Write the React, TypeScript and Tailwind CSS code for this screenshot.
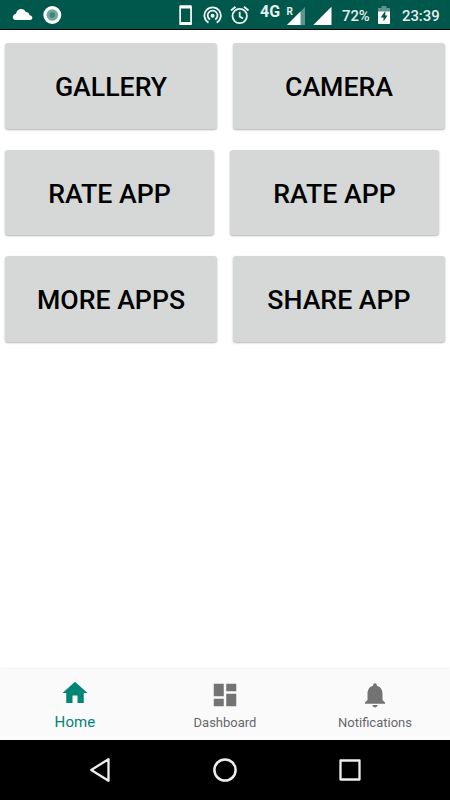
import React from "react";

function StatusBar() {
  return (
    <header className="flex h-[30px] items-start border-b border-black bg-[#00574b] font-medium text-[#e6efed]">
      <svg className="ml-[12px] mt-[8px] shrink-0" width="21" height="13" viewBox="0 0 21 13">
        <path d="M4.5 12Q.8 12 .8 9.2 1 6.5 4 5.8 5 1 9.2 1q3.3 0 4.6 3 3.3.2 3.7 3.2 2.9.4 2.9 2.8Q20.2 12 18 12Z" fill="#fff" />
      </svg>
      <svg className="ml-[10px] mt-[5px] shrink-0" width="20" height="20" viewBox="0 0 20 20">
        <circle cx="9.3" cy="10" r="9" fill="#fff" />
        <circle cx="9.3" cy="10" r="5.8" fill="#6fa79f" />
        <circle cx="9.3" cy="10" r="2.7" fill="#3f857b" />
      </svg>
      <svg className="ml-[116px] mt-[5px] shrink-0" width="14" height="21" viewBox="0 0 14 21">
        <path fillRule="evenodd" d="M1.5.3h10.200q1.200 0 1.200 1.200v17.400q0 1.200-1.200 1.200H1.500Q.3 20.100.3 18.900V1.500Q.3.300 1.500.300ZM2 3.500v13.500h9.200V3.500Z" fill="#fff" />
      </svg>
      <svg className="ml-[10px] mt-[5px] shrink-0" width="20" height="20" viewBox="0 0 20 20" fill="none" stroke="#eef4f2" strokeWidth="1.8">
        <path d="M5.5 17.6A8.2 8.2 0 1 1 13.7 17.6" />
        <path d="M7 14.6A4.9 4.9 0 1 1 12.2 14.6" />
        <circle cx="9.6" cy="10.7" r="2" fill="#eef4f2" stroke="none" />
      </svg>
      <svg className="ml-[7px] mt-[5px] shrink-0" width="20" height="20" viewBox="0 0 20 20" fill="none" stroke="#eef4f2" strokeWidth="1.8">
        <circle cx="9.7" cy="11" r="7.2" />
        <path d="M1 5.5 5.5 1.7M14 1.7l4.5 3.8M9.7 6.8V11.5l3.3 2" />
      </svg>
      <span className="ml-[10px] mt-[2.5px] w-[22px] shrink-0 text-[16px] leading-[17px] font-bold">4G</span>
      <svg className="ml-[4px] mt-[6px] shrink-0" width="20" height="20" viewBox="0 0 20 20">
        <path d="M19 1V19H1Z" fill="#5d958c" />
        <path d="M14.5 5.5V19H1Z" fill="#fff" />
        <path d="M0 0H9V9H0Z" fill="#00574b" />
        <text x="0.5" y="8.8" fontSize="10" fontWeight="700" fill="#e6efed">R</text>
      </svg>
      <svg className="ml-[7px] mt-[6px] shrink-0" width="20" height="20" viewBox="0 0 20 20">
        <path d="M18.5 .8V19H.3Z" fill="#fff" />
      </svg>
      <span className="ml-[9px] mt-[6px] w-[29px] shrink-0 text-[14.8px] leading-[20px]">72%</span>
      <svg className="ml-[7px] mt-[6px] shrink-0" width="12" height="19" viewBox="0 0 12 19">
        <path d="M3.5 0h5v2H12v4.5H0V2h3.5Z" fill="#5d958c" />
        <path d="M0 5.5h12V17q0 1-1 1H1q-1 0-1-1Z" fill="#fff" />
        <path d="M7.3 5 2.7 11.5H5.5V15.5L9.5 9.5H7.3Z" fill="#00574b" />
      </svg>
      <span className="ml-[12px] mt-[6px] shrink-0 text-[14.8px] leading-[20px]">23:39</span>
    </header>
  );
}

function MenuButton({ label, size }: { label: string; size: string }) {
  return (
    <button
      className={`h-[85.5px] shrink-0 rounded-[3px] bg-[#d6d8d7] pt-[2px] text-[26.7px] font-medium text-black shadow-[0_1px_2px_rgba(0,0,0,0.3)] ${size}`}
    >
      {label}
    </button>
  );
}

export default function App() {
  return (
    <div className="flex h-[800px] w-[450px] flex-col overflow-hidden bg-white font-['Roboto',sans-serif]">
      <StatusBar />
      <main className="flex flex-1 flex-col gap-[21px] pl-[5px] pt-[13.3px]">
        <div className="flex gap-4">
          <MenuButton label="GALLERY" size="w-[212px]" />
          <MenuButton label="CAMERA" size="w-[212px]" />
        </div>
        <div className="flex gap-4">
          <MenuButton label="RATE APP" size="w-[209px]" />
          <MenuButton label="RATE APP" size="w-[209px]" />
        </div>
        <div className="flex gap-4">
          <MenuButton label="MORE APPS" size="w-[212px]" />
          <MenuButton label="SHARE APP" size="w-[212px]" />
        </div>
      </main>
      <nav className="grid h-[71px] grid-cols-3 bg-[#fafafa] text-[13px] text-[#686868] shadow-[0_-1px_2px_rgba(0,0,0,0.06)]">
        <div className="flex flex-col items-center pt-[9px] text-[15px] text-[#008577]">
          <svg width="30" height="30" viewBox="0 0 24 24" fill="currentColor">
            <path d="M10 20v-6h4v6h5v-8h3L12 3 2 12h3v8z" />
          </svg>
          <span className="mt-[4px] leading-[20px] tracking-[0.1px]">Home</span>
        </div>
        <div className="flex flex-col items-center pt-[11px]">
          <svg width="30" height="30" viewBox="0 0 24 24" fill="#737373">
            <path d="M3 13h8V3H3v10zm0 8h8v-6H3v6zm10 0h8V11h-8v10zm0-18v6h8V3h-8z" />
          </svg>
          <span className="mt-[3px] leading-[20px]">Dashboard</span>
        </div>
        <div className="flex flex-col items-center pt-[11px]">
          <svg width="30" height="30" viewBox="0 0 24 24" fill="#737373">
            <path d="M12 22c1.1 0 2-.9 2-2h-4c0 1.1.89 2 2 2zm6-6v-5c0-3.070-1.640-5.640-4.500-6.320V4c0-.83-.67-1.500-1.500-1.500s-1.500.67-1.500 1.500v.68C7.630 5.360 6 7.920 6 11v5l-2 2v1h16v-1l-2-2z" />
          </svg>
          <span className="mt-[3px] leading-[20px]">Notifications</span>
        </div>
      </nav>
      <footer className="flex h-[60px] items-center gap-[99px] bg-black pl-[87px]">
        <svg width="26" height="26" viewBox="0 0 26 26" fill="none" stroke="#eee" strokeWidth="2.3" strokeLinejoin="round">
          <path d="M21.500 2.200V23.800L4.200 13Z" />
        </svg>
        <svg width="26" height="26" viewBox="0 0 26 26" fill="none" stroke="#eee" strokeWidth="2.5">
          <circle cx="13" cy="13" r="10.6" />
        </svg>
        <svg width="26" height="26" viewBox="0 0 26 26" fill="none" stroke="#eee" strokeWidth="2.3" strokeLinejoin="round">
          <rect x="3.5" y="3.5" width="19" height="19" />
        </svg>
      </footer>
    </div>
  );
}
